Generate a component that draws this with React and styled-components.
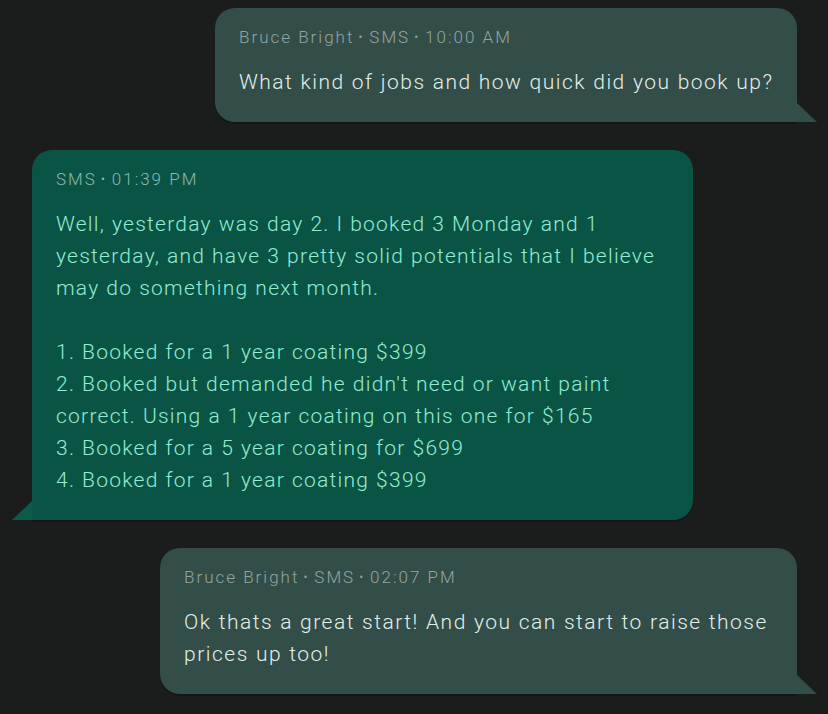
import React from 'react';
import styled, { createGlobalStyle, css } from 'styled-components';

const GlobalStyle = createGlobalStyle`
  html, body {
    margin: 0;
    padding: 0;
    background: #1b1c1c;
  }
  body {
    font-family: Roboto, "Liberation Sans", sans-serif;
  }
`;

const Thread = styled.div`
  width: 828px;
  min-height: 714px;
  box-sizing: border-box;
  padding: 8px 31px 20px 32px;
  display: flex;
  flex-direction: column;
  gap: 28px;
  background: #1b1c1c;
`;

const Row = styled.div`
  display: flex;
  justify-content: ${p => (p.$out ? 'flex-start' : 'flex-end')};
`;

const Bubble = styled.div`
  position: relative;
  box-sizing: border-box;
  width: ${p => p.$width}px;
  padding: 18px 20px 24px 24px;
  border-radius: 20px;
  background: ${p => (p.$out ? '#0a5445' : '#334d48')};
  box-shadow: 0 2px 0 rgba(0, 0, 0, 0.25);

  ${p => p.$out
    ? css`
        border-bottom-left-radius: 0;
        &::after {
          content: '';
          position: absolute;
          right: 100%;
          bottom: 0;
          width: 20px;
          height: 19px;
          background: #0c5a49;
          clip-path: polygon(100% 0, 100% 100%, 0 100%);
        }
      `
    : css`
        border-bottom-right-radius: 0;
        &::after {
          content: '';
          position: absolute;
          left: 100%;
          bottom: 0;
          width: 20px;
          height: 19px;
          background: #334d48;
          clip-path: polygon(0 0, 100% 100%, 0 100%);
        }
      `}
`;

const Meta = styled.div`
  font-size: 17px;
  line-height: 22px;
  font-weight: 300;
  letter-spacing: 2px;
  color: ${p => (p.$out ? '#8cb9ad' : '#93a5a1')};
  margin-bottom: 18px;
  white-space: nowrap;
`;

const Dot = styled.span`
  display: inline-block;
  font-size: 12px;
  letter-spacing: 0;
  margin: 0 7px 0 4px;
  vertical-align: 2px;
`;

const Text = styled.div`
  font-size: 21px;
  line-height: 32px;
  font-weight: 300;
  letter-spacing: ${p => (p.$out ? '1.25px' : '1.5px')};
  word-spacing: 0.5px;
  color: ${p => (p.$out ? '#93ecd2' : '#e2f0ec')};
  white-space: pre-wrap;
`;

const MetaLine = ({ parts, out }) => (
  <Meta $out={out}>
    {parts.map((t, i) => (
      <React.Fragment key={i}>
        {i > 0 && <Dot>•</Dot>}
        {t}
      </React.Fragment>
    ))}
  </Meta>
);

const messages = [
  {
    meta: ['Bruce Bright', 'SMS', '10:00 AM'],
    width: 582,
    text: 'What kind of jobs and how quick did you book up?',
  },
  {
    out: true,
    meta: ['SMS', '01:39 PM'],
    width: 661,
    text:
      'Well, yesterday was day 2. I booked 3 Monday and 1 yesterday, and have 3 pretty solid potentials that I believe may do something next month.\n\n' +
      '1. Booked for a 1 year coating $399\n' +
      "2. Booked but demanded he didn't need or want paint correct. Using a 1 year coating on this one for $165\n" +
      '3. Booked for a 5 year coating for $699\n' +
      '4. Booked for a 1 year coating $399',
  },
  {
    meta: ['Bruce Bright', 'SMS', '02:07 PM'],
    width: 637,
    text: 'Ok thats a great start! And you can start to raise those prices up too!',
  },
];

const App = () => (
  <>
    <GlobalStyle />
    <Thread>
      {messages.map((m, i) => (
        <Row key={i} $out={m.out}>
          <Bubble $out={m.out} $width={m.width}>
            <MetaLine parts={m.meta} out={m.out} />
            <Text $out={m.out}>{m.text}</Text>
          </Bubble>
        </Row>
      ))}
    </Thread>
  </>
);

export default App;
